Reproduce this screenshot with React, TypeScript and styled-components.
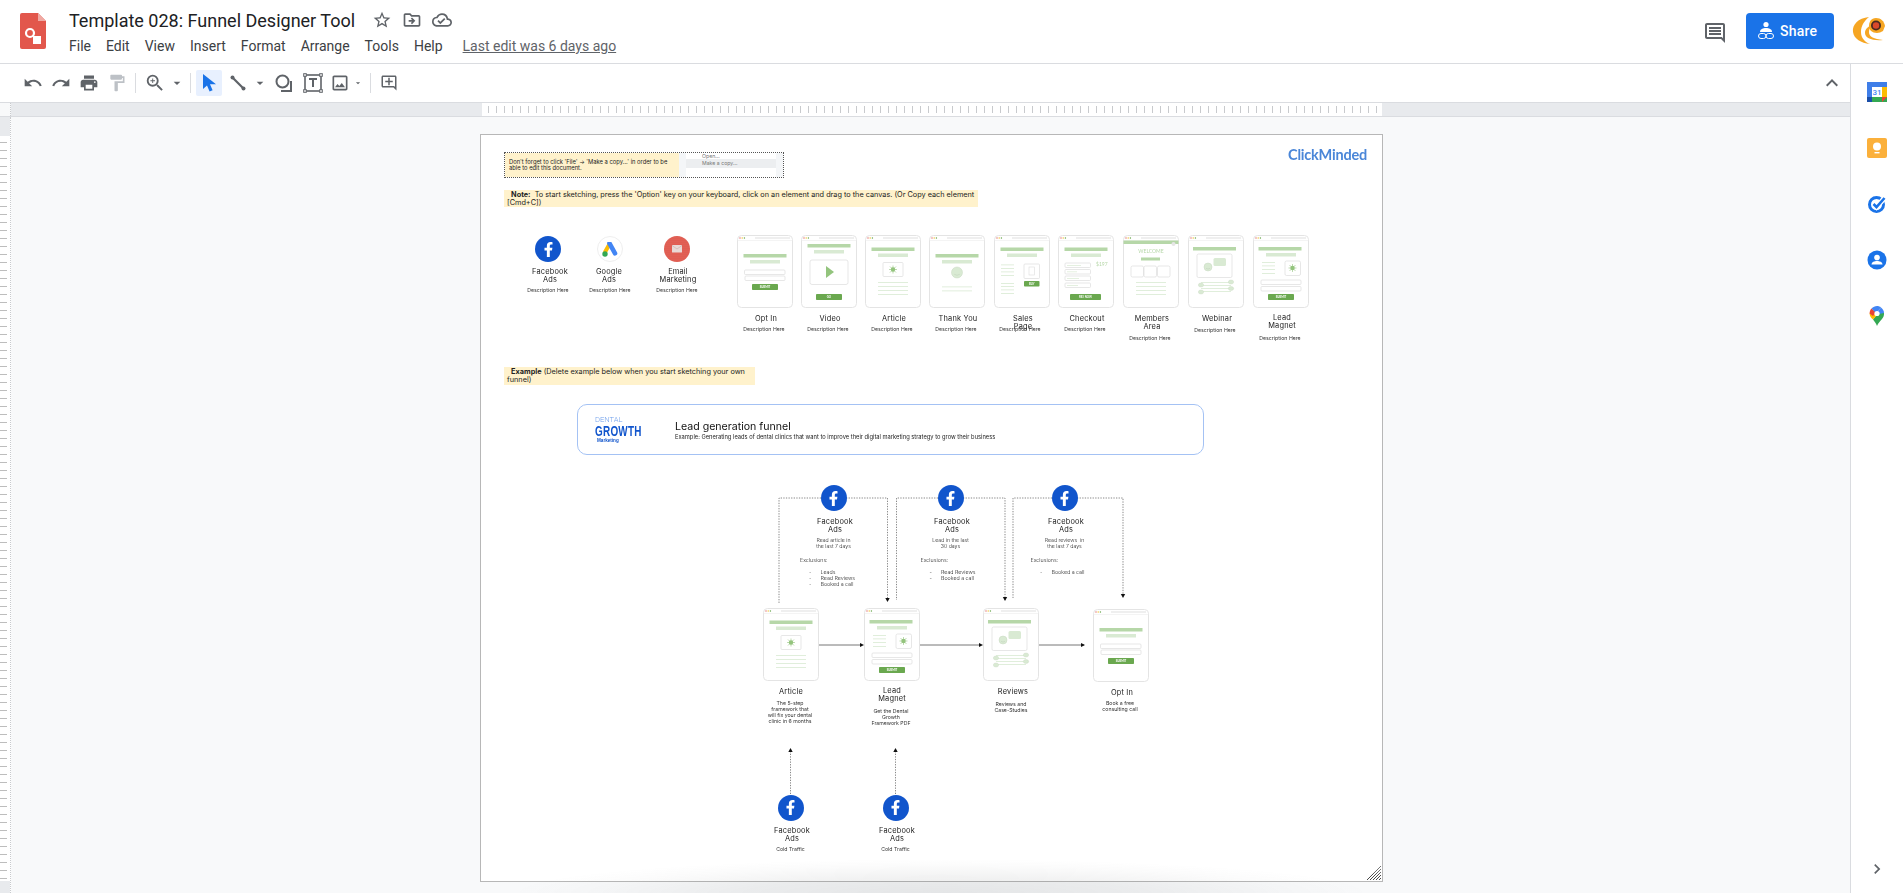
import * as React from 'react';
import styled, { createGlobalStyle } from 'styled-components';
import {
  MdArrowDropDown,
  MdChevronRight,
  MdFormatPaint,
  MdKeyboardArrowUp,
  MdOutlineAddComment,
  MdOutlineCloudDone,
  MdOutlineComment,
  MdOutlineDriveFileMove,
  MdOutlineImage,
  MdPrint,
  MdRedo,
  MdStarBorder,
  MdUndo,
  MdZoomIn,
} from 'react-icons/md';
import { FaFacebookF } from 'react-icons/fa';

// top-left corner of the drawing sheet in the window, items below are placed in window coords
const OX = 481;
const OY = 135;

const GREEN_DARK = '#6aa84f';
const GREEN_MID = '#b6d7a8';
const GREEN_LIGHT = '#d9ead3';
const GREY_LINE = '#e4e4e4';

const GlobalStyle = createGlobalStyle`
  html, body {
    margin: 0;
    height: 100%;
    overflow: hidden;
    background: #fff;
    font-family: Roboto, "Liberation Sans", sans-serif;
  }
`;

const Shell = styled.div`
  display: flex;
  flex-direction: column;
  height: 893px;
  overflow: hidden;
`;

const Header = styled.header`
  display: flex;
  align-items: flex-start;
  height: 63px;
  border-bottom: 1px solid #dadce0;
  padding-left: 20px;
`;

const TitleBlock = styled.div`
  display: flex;
  flex-direction: column;
  margin-left: 23px;
`;

const TitleRow = styled.div`
  display: flex;
  align-items: center;
  height: 24px;
  margin-top: 8px;
`;

const Title = styled.div`
  font-size: 18px;
  color: #202124;
  width: 298px;
  white-space: nowrap;
`;

const TitleIcon = styled.span`
  display: flex;
  justify-content: center;
  width: 30px;
  color: #5f6368;
`;

const Menu = styled.nav`
  display: flex;
  align-items: center;
  gap: 15px;
  margin-top: 6px;
  font-size: 14px;
  color: #3c4043;
`;

const LastEdit = styled.span`
  margin-left: 5px;
  color: #5f6368;
  text-decoration: underline;
`;

const HeaderRight = styled.div`
  display: flex;
  align-items: center;
  margin-left: auto;
  margin-top: 13px;
`;

const CommentIcon = styled.span`
  display: flex;
  color: #5f6368;
  margin-right: 19px;
  margin-top: 3px;
`;

const ShareButton = styled.button`
  display: flex;
  align-items: center;
  gap: 5px;
  width: 88px;
  height: 36px;
  padding: 0 0 0 11px;
  border: 0;
  border-radius: 4px;
  background: #1a73e8;
  color: #fff;
  font-family: Roboto, sans-serif;
  font-size: 14px;
  font-weight: 500;
  letter-spacing: 0.2px;
`;

const Avatar = styled.span`
  display: flex;
  margin: 0 17px 0 18px;
`;

const Body = styled.div`
  display: flex;
  flex: 1;
  min-height: 0;
`;

const Workspace = styled.main`
  display: flex;
  flex-direction: column;
  flex: 1;
  min-width: 0;
`;

const Toolbar = styled.div`
  display: flex;
  align-items: center;
  height: 38px;
  padding-left: 19px;
  border-bottom: 1px solid #dadce0;
`;

const ToolButton = styled.span<{ $w?: number; $active?: boolean; $ml?: number; $muted?: boolean }>`
  display: flex;
  align-items: center;
  justify-content: center;
  flex: none;
  width: ${(p) => p.$w ?? 28}px;
  height: 26px;
  margin-left: ${(p) => p.$ml ?? 0}px;
  border-radius: 2px;
  background: ${(p) => (p.$active ? '#e8f0fe' : 'transparent')};
  color: ${(p) => (p.$muted ? '#bdc1c6' : '#5f6368')};
`;

const ToolSep = styled.span<{ $ml: number; $mr: number }>`
  flex: none;
  width: 1px;
  height: 20px;
  margin: 0 ${(p) => p.$mr}px 0 ${(p) => p.$ml}px;
  background: #dadce0;
`;

const Collapse = styled.span`
  display: flex;
  margin-left: auto;
  margin-right: 6px;
  color: #5f6368;
`;

const TopRuler = styled.div`
  display: flex;
  height: 13px;
  background: #e8eaed;
  border-bottom: 1px solid #dadce0;
`;

const RulerCorner = styled.div`
  width: 10px;
  background: #f8f9fa;
  border-right: 1px dotted #c8cacd;
`;

const RulerScale = styled.div`
  width: 900px;
  margin-left: 471px;
  background-color: #fff;
  background-image: repeating-linear-gradient(90deg, #c8cacd 0 1px, transparent 1px 8px);
  background-position: 6px 3px;
  background-size: 100% 7px;
  background-repeat: no-repeat;
`;

const CanvasRow = styled.div`
  display: flex;
  flex: 1;
  min-height: 0;
`;

const LeftRuler = styled.div`
  display: flex;
  flex-direction: column;
  flex: none;
  width: 10px;
  border-right: 1px dotted #c8cacd;
`;

const LeftRulerGap = styled.div<{ $h?: number }>`
  flex: ${(p) => (p.$h ? 'none' : 1)};
  height: ${(p) => (p.$h ? `${p.$h}px` : 'auto')};
  background: #e8eaed;
`;

const LeftRulerScale = styled.div`
  height: 745px;
  background-color: #fff;
  background-image: repeating-linear-gradient(180deg, #bdbdbd 0 1px, transparent 1px 8px);
  background-position: 0 6px;
  background-size: 7px 100%;
  background-repeat: no-repeat;
`;

const Canvas = styled.div`
  position: relative;
  flex: 1;
  overflow: hidden;
  background: #f8f9fa;
  padding: 17px 0 0 469px;

  &::after {
    content: '';
    position: absolute;
    left: 500px;
    bottom: 0;
    width: 860px;
    height: 34px;
    background: radial-gradient(
      ellipse 50% 100% at 50% 100%,
      rgba(60, 64, 67, 0.1),
      rgba(60, 64, 67, 0.07) 45%,
      rgba(60, 64, 67, 0.02) 80%,
      transparent
    );
    pointer-events: none;
  }
`;

const Sheet = styled.div`
  position: relative;
  box-sizing: border-box;
  width: 903px;
  height: 748px;
  border: 1px solid #b7b7b7;
  background: #fff;
`;

const Drawing = styled.div`
  position: absolute;
  inset: 0;
  filter: blur(0.3px);
  font-family: Inter, Lato, sans-serif;
  color: #222;
`;

const ResizeGrip = styled.svg`
  position: absolute;
  right: 1px;
  bottom: 1px;
`;

const Place = styled.div<{ $x: number; $y: number }>`
  position: absolute;
  left: ${(p) => p.$x - OX}px;
  top: ${(p) => p.$y - OY}px;
`;

const Caption = styled(Place)`
  transform: translateX(-50%);
  text-align: center;
  white-space: pre;
`;

const NodeLabel = styled(Caption)`
  margin-top: 1px;
  font-size: 7.4px;
  line-height: 8.2px;
  letter-spacing: 0.2px;
`;

const NodeDesc = styled(Caption)`
  font-size: 5.2px;
  line-height: 6px;
  color: #333;
`;

const AudienceDesc = styled(NodeDesc)`
  font-weight: 300;
  color: #222;
`;

const SheetNote = styled(Place)`
  font-size: 5.3px;
  font-weight: 300;
  line-height: 6px;
  white-space: pre;
  color: #222;
`;

const Notice = styled(Place)<{ $w: number; $h: number }>`
  box-sizing: border-box;
  width: ${(p) => p.$w}px;
  height: ${(p) => p.$h}px;
  padding: 1px 3px;
  background: #fff2cc;
  font-size: 7.3px;
  line-height: 8px;
  white-space: pre;
  color: #222;

  b {
    font-weight: 700;
  }
`;

const CopyNotice = styled(Place)`
  display: flex;
  box-sizing: border-box;
  width: 280px;
  height: 26px;
  border: 1px dotted #555;
`;

const CopyText = styled.div`
  flex: none;
  width: 174px;
  padding: 6px 4px 0;
  box-sizing: border-box;
  background: #fff2cc;
  font-size: 5.8px;
  line-height: 6.4px;
  white-space: pre;
`;

const CopyShot = styled.div`
  flex: 1;
  padding: 0 7px;
  background: #f4f6f8;
`;

const CopyMenu = styled.div`
  height: 100%;
  overflow: hidden;
  background: #fff;
  color: #777;
  font-size: 5.2px;
`;

const CopyMenuItem = styled.div<{ $on?: boolean }>`
  height: ${(p) => (p.$on ? 9 : 6)}px;
  padding-left: 16px;
  line-height: ${(p) => (p.$on ? 9 : 6)}px;
  background: ${(p) => (p.$on ? '#eceef0' : 'transparent')};
`;

const Brand = styled(Place)`
  font-family: Lato, sans-serif;
  font-size: 14.5px;
  font-weight: 700;
  line-height: 14px;
  letter-spacing: -0.2px;
  color: #4a86d8;
`;

const FunnelBanner = styled(Place)`
  display: flex;
  align-items: center;
  box-sizing: border-box;
  width: 627px;
  height: 51px;
  padding-left: 17px;
  border: 1px solid #a4c2f4;
  border-radius: 10px;
`;

const BannerLogo = styled.div`
  display: flex;
  flex-direction: column;
  width: 80px;
  color: #1155cc;
`;

const LogoTop = styled.span`
  font-family: Roboto, sans-serif;
  font-size: 7.6px;
  font-weight: 300;
  line-height: 8px;
  color: #6d9eeb;
`;

const LogoMain = styled.span`
  display: block;
  transform: scaleX(0.66);
  transform-origin: left center;
  font-family: "Liberation Sans", sans-serif;
  font-size: 15px;
  font-weight: 700;
  line-height: 13px;
  letter-spacing: 0.4px;
`;

const LogoSub = styled.span`
  padding-left: 2px;
  font-family: "Liberation Sans", sans-serif;
  font-size: 4.6px;
  font-weight: 700;
  line-height: 7px;
`;

const BannerText = styled.div`
  margin-top: 1px;
`;

const BannerTitle = styled.div`
  font-family: Inter, sans-serif;
  font-size: 10.6px;
  line-height: 12px;
  color: #111;
`;

const BannerSub = styled.div`
  font-family: Inter, sans-serif;
  font-size: 5.76px;
  line-height: 7px;
  color: #222;
`;

const Round = styled(Place)<{ $bg: string; $ring?: boolean }>`
  display: flex;
  align-items: center;
  justify-content: center;
  width: 26px;
  height: 26px;
  margin: -13px 0 0 -13px;
  box-sizing: border-box;
  border-radius: 50%;
  border: ${(p) => (p.$ring ? '1px solid #eee' : '0')};
  background: ${(p) => p.$bg};
  color: #fff;
`;

const Connectors = styled.svg`
  position: absolute;
  left: 0;
  top: 0;
`;

const SidePanel = styled.aside`
  display: flex;
  flex-direction: column;
  align-items: center;
  flex: none;
  box-sizing: border-box;
  width: 53px;
  padding: 18px 0 14px;
  gap: 36px;
  border-left: 1px solid #dadce0;
  color: #5f6368;
`;

const SideExpand = styled.span`
  display: flex;
  margin-top: auto;
`;

/* ---------- drawings ---------- */

const SlidesLogo = () => (
  <svg width="26" height="36" viewBox="0 0 26 36" style={{ marginTop: 13 }}>
    <path d="M2 0h16l8 8v26a2 2 0 0 1-2 2H2a2 2 0 0 1-2-2V2a2 2 0 0 1 2-2z" fill="#e2574c" />
    <path d="M18 0l8 8h-8z" fill="#f0a9a3" />
    <circle cx="10" cy="20" r="4" fill="none" stroke="#fff" strokeWidth="2.2" />
    <rect x="13" y="23" width="8" height="8" fill="#fff" />
  </svg>
);

const ShareGlyph = () => (
  <svg width="18" height="20" viewBox="0 0 18 20" fill="none">
    <circle cx="9" cy="3.5" r="2.6" fill="#fff" />
    <path d="M3 11c0-3 3-4 6-4s6 1 6 4H3z" fill="#fff" />
    <rect x="1.5" y="12.5" width="7.5" height="5" rx="2.5" stroke="#fff" />
    <rect x="9" y="12.5" width="7.5" height="5" rx="2.5" stroke="#fff" />
  </svg>
);

const SwirlAvatar = () => (
  <svg width="34" height="30" viewBox="0 0 34 30" fill="none">
    <path d="M17 1C6 2 0 9 1 16c1 7 8 11 17 12-5-2-9-6-9-12 0-6 3-11 8-15z" fill="#f6a623" />
    <path d="M21 9c-5 1-8 4-8 8 0 5 7 8 18 7-9-1-14-3-14-8 0-3 1-5 4-7z" fill="#f6a623" />
    <path d="M24 2c-5 0-7 4-7 8 0 4 3 7 8 7 2 0 4-1 6-2l2-5c-1-5-4-8-9-8z" fill="#f6a623" />
    <circle cx="24" cy="9.500" r="5" fill="#4a2a20" />
    <circle cx="24" cy="9.500" r="3.200" fill="#d9482b" />
  </svg>
);

const CursorGlyph = () => (
  <svg width="18" height="20" viewBox="0 0 18 20">
    <path d="M3 1v15l4-3.6 2.6 6.2 3-1.3-2.6-6H16z" fill="#1a73e8" />
  </svg>
);

const LineGlyph = () => (
  <svg width="18" height="18" viewBox="0 0 18 18">
    <path d="M3.5 3.5l11 11" stroke="#5f6368" strokeWidth="2.2" />
    <circle cx="3.5" cy="3.5" r="2" fill="#5f6368" />
    <circle cx="14.5" cy="14.5" r="2" fill="#5f6368" />
  </svg>
);

const ShapeGlyph = () => (
  <svg width="20" height="20" viewBox="0 0 20 20" fill="none" stroke="#5f6368" strokeWidth="2">
    <circle cx="8.5" cy="8.5" r="6" />
    <path d="M17 8v10H7" />
  </svg>
);

const TextBoxGlyph = () => (
  <svg width="20" height="20" viewBox="0 0 20 20" fill="none" stroke="#5f6368">
    <rect x="2" y="2" width="16" height="16" strokeWidth="1.6" />
    <rect x="0.7" y="0.7" width="2.6" height="2.6" fill="#fff" />
    <rect x="16.7" y="0.7" width="2.6" height="2.6" fill="#fff" />
    <rect x="0.7" y="16.7" width="2.6" height="2.6" fill="#fff" />
    <rect x="16.7" y="16.7" width="2.6" height="2.6" fill="#fff" />
    <path d="M6 6h8M10 6v8" strokeWidth="2" />
  </svg>
);

const CalendarGlyph = () => (
  <svg width="20" height="20" viewBox="0 0 20 20">
    <rect width="20" height="20" rx="1.5" fill="#fff" />
    <path d="M0 0h20v5H0z" fill="#3f7ee8" />
    <path d="M0 5h5v10H0z" fill="#3f7ee8" />
    <path d="M15 5h5v10h-5z" fill="#fbbc04" />
    <path d="M5 15h15v5H5z" fill="#34a853" />
    <path d="M0 15h5v5H0z" fill="#1a4ea8" />
    <path d="M15 15h5l-5 5z" fill="#ea4335" />
    <text x="10" y="12.8" textAnchor="middle" fontSize="8" fontFamily="Roboto, sans-serif" fontWeight="500" fill="#4285f4">
      31
    </text>
  </svg>
);

const KeepGlyph = () => (
  <svg width="20" height="20" viewBox="0 0 20 20">
    <rect width="20" height="20" rx="2" fill="#fbb03b" />
    <circle cx="10" cy="8.5" r="4" fill="#fff" />
    <rect x="7.5" y="14" width="5" height="1.4" fill="#fff" />
  </svg>
);

const TasksGlyph = () => (
  <svg width="20" height="20" viewBox="0 0 20 20" fill="none">
    <circle cx="9.5" cy="10.5" r="7" stroke="#1a73e8" strokeWidth="3" />
    <path d="M6.5 10l3 3 8-9" stroke="#fff" strokeWidth="5" />
    <path d="M6.5 10l3 3 8-9" stroke="#1a73e8" strokeWidth="2.6" />
  </svg>
);

const ContactsGlyph = () => (
  <svg width="20" height="20" viewBox="0 0 20 20">
    <circle cx="10" cy="10" r="9.5" fill="#1a73e8" />
    <circle cx="10" cy="7.5" r="2.8" fill="#fff" />
    <path d="M4.5 14.5c0-2.4 3-3.5 5.5-3.5s5.500 1.100 5.500 3.500z" fill="#fff" />
  </svg>
);

const MapsGlyph = () => (
  <svg width="16" height="20" viewBox="0 0 16 20">
    <path d="M8 20c-1-3-2.500-4.500-4-6.500L10 6l5 1c.3 2.500-.8 4.500-2 6-1.600 2-4 4-5 7z" fill="#34a853" />
    <path d="M2.500 3L0.600 7.500c0 2.300 1.400 4.300 3.400 6L9 8z" fill="#fbbc04" />
    <path d="M2.500 2.500L7 6.500 4 10 0.600 7.500c0-2 .7-3.700 1.900-5z" fill="#ea4335" />
    <path d="M2.500 2.500C4 .9 6 0 8 0c1.500 0 3 .5 4 1.500L7 7z" fill="#4285f4" />
    <path d="M12 1.500c1.900 1.300 3 3.500 3 5.500L10 8 7 7z" fill="#4285f4" />
    <circle cx="8" cy="7.500" r="2.600" fill="#fff" />
  </svg>
);

const GoogleAdsGlyph = () => (
  <svg width="16" height="15" viewBox="0 0 16 15">
    <path d="M5.500 1.500L1 9.500l3.500 2L9 3.500z" fill="#fbbc04" />
    <path d="M5.500 2.500a2.300 2.300 0 0 1 4-2.300l5.500 10a2.300 2.300 0 0 1-4 2.300z" fill="#4285f4" />
    <circle cx="3" cy="12" r="2.700" fill="#34a853" />
  </svg>
);

const EmailGlyph = () => (
  <svg width="26" height="26" viewBox="0 0 26 26">
    <defs>
      <pattern id="dots" width="2" height="2" patternUnits="userSpaceOnUse">
        <circle cx="1" cy="1" r="0.45" fill="#fff" opacity="0.7" />
      </pattern>
    </defs>
    <circle cx="13" cy="13" r="13" fill="#dd4f43" />
    <circle cx="13" cy="13" r="13" fill="url(#dots)" />
    <rect x="8" y="9" width="10" height="7.500" rx="0.600" fill="#e9d9d6" />
    <path d="M8 9.500l5 3.500 5-3.500" fill="none" stroke="#cbb4b0" strokeWidth="0.700" />
  </svg>
);

/* ---------- page mockups ---------- */

type Kind = 'optin' | 'video' | 'article' | 'thanks' | 'sales' | 'checkout' | 'members' | 'webinar' | 'magnet';

const Bar = ({ x, y, w, h = 3.5, c = GREEN_MID }: { x: number; y: number; w: number; h?: number; c?: string }) => (
  <rect x={x} y={y} width={w} height={h} fill={c} />
);

const Heading = ({ y }: { y: number }) => (
  <>
    <Bar x={6.500} y={y} w={43} />
    <Bar x={13} y={y + 6} w={30} c={GREEN_LIGHT} />
  </>
);

const Rows = ({ x, w, ys }: { x: number; w: number; ys: number[] }) => (
  <>
    {ys.map((y) => (
      <rect key={y} x={x} y={y} width={w} height="0.800" fill={GREEN_LIGHT} />
    ))}
  </>
);

const Field = ({ x, y, w, h = 4.500 }: { x: number; y: number; w: number; h?: number }) => (
  <rect x={x} y={y} width={w} height={h} rx="1" fill="#fff" stroke="#dcdcdc" strokeWidth="0.700" />
);

const Cta = ({ x, y, w, h = 6, label }: { x: number; y: number; w: number; h?: number; label: string }) => (
  <>
    <rect x={x} y={y} width={w} height={h} rx="0.800" fill={GREEN_DARK} />
    <text
      x={x + w / 2}
      y={y + h / 2 + 1}
      textAnchor="middle"
      fontSize="2.800"
      fontWeight="700"
      fontFamily="Lato, sans-serif"
      fill="#fff"
    >
      {label}
    </text>
  </>
);

const Sun = ({ cx, cy }: { cx: number; cy: number }) => (
  <>
    <circle cx={cx} cy={cy} r="2.200" fill="#93c47d" />
    <path
      d={`M${cx - 4} ${cy}h8M${cx} ${cy - 4}v8M${cx - 3} ${cy - 3}l6 6M${cx - 3} ${cy + 3}l6-6`}
      stroke="#93c47d"
      strokeWidth="0.600"
    />
  </>
);

const Face = ({ cx, cy, r }: { cx: number; cy: number; r: number }) => (
  <>
    <circle cx={cx} cy={cy} r={r} fill={GREEN_LIGHT} stroke="#c9d9c3" strokeWidth="0.500" />
    <path d={`M${cx - r / 2} ${cy + r / 3}q${r / 2} ${r / 3} ${r} 0`} fill="none" stroke="#b8c9b2" strokeWidth="0.400" />
  </>
);

const MockBody = ({ kind }: { kind: Kind }) => {
  switch (kind) {
    case 'optin':
      return (
        <>
          <Heading y={19} />
          <Field x={7.500} y={35} w={40.500} />
          <Field x={8} y={41} w={40} />
          <Cta x={15} y={49} w={26} label="SUBMIT" />
        </>
      );
    case 'video':
      return (
        <>
          <Heading y={9} />
          <rect x={9} y={25} width="38" height="24.500" rx="2" fill="#fff" stroke="#dcdcdc" strokeWidth="0.700" />
          <path d="M25 31l8 6-8 6z" fill="#93c47d" />
          <Cta x={15} y={59} w={26} label="GO" />
        </>
      );
    case 'article':
      return (
        <>
          <Heading y={12.500} />
          <rect x={18} y={27.500} width="20" height="14" rx="1" fill="#fff" stroke="#dcdcdc" strokeWidth="0.700" />
          <Sun cx={28} cy={34.500} />
          <Rows x={13} w={30} ys={[47, 51, 55, 59]} />
        </>
      );
    case 'thanks':
      return (
        <>
          <Heading y={19} />
          <Face cx={28} cy={37.500} r={5.500} />
          <Rows x={13} w={30} ys={[51.500, 55.500]} />
        </>
      );
    case 'sales':
      return (
        <>
          <Heading y={12.500} />
          <Rows x={7} w={13} ys={[29.500, 33, 36.500, 40, 48, 51, 54.500, 58]} />
          <rect x={30} y={29} width="15.500" height="14.500" rx="1" fill="#fff" stroke="#dcdcdc" strokeWidth="0.700" />
          <rect x={35} y={32} width="5.500" height="8" fill="#fff" stroke="#dcdcdc" strokeWidth="0.600" />
          <Cta x={30} y={46} w={15.500} h={5.500} label="BUY" />
        </>
      );
    case 'checkout':
      return (
        <>
          <Heading y={12.500} />
          <text x={38} y={31} fontSize="5" fontFamily="Lato, sans-serif" fill={GREEN_MID}>
            $197
          </text>
          {[28, 34.500, 41, 48].map((y, i) => (
            <React.Fragment key={y}>
              <Field x={7} y={y} w={25.500} />
              <rect x={9} y={y + 2} width={[14, 10, 12, 11][i]} height="0.700" fill={GREEN_LIGHT} />
            </React.Fragment>
          ))}
          <Cta x={12} y={59} w={31} label="PAY NOW" />
        </>
      );
    case 'members':
      return (
        <>
          <Bar x={0.500} y={5.500} w={55} h={3.500} />
          <circle cx={50.500} cy={9} r="2" fill="#e6e6e6" />
          <text x={28} y={17.500} textAnchor="middle" fontSize="5" fontFamily="Lato, sans-serif" fill={GREEN_MID}>
            WELCOME
          </text>
          <Bar x={18} y={22.500} w={19} h={3} />
          {[8, 21, 34.500].map((x) => (
            <rect key={x} x={x} y={31} width="12.500" height="11" rx="1.500" fill="#fff" stroke="#dcdcdc" strokeWidth="0.700" />
          ))}
          <Rows x={13} w={30} ys={[47, 51, 55, 59]} />
        </>
      );
    case 'webinar':
      return (
        <>
          <Bar x={5} y={12} w={43} />
          <rect x={9} y={19} width="35" height="23.500" rx="1.500" fill="#fff" stroke="#dcdcdc" strokeWidth="0.700" />
          <Face cx={20} cy={32} r={4} />
          <rect x={25.500} y={23} width="12.500" height="8" rx="1.500" fill={GREEN_LIGHT} />
          <Rows x={13} w={30} ys={[47, 50, 53, 56]} />
          <ellipse cx={43} cy={47} rx="2.700" ry="2" fill={GREEN_LIGHT} stroke="#c9d9c3" strokeWidth="0.400" />
          <ellipse cx={13} cy={50} rx="2.700" ry="2" fill={GREEN_LIGHT} stroke="#c9d9c3" strokeWidth="0.400" />
          <ellipse cx={43} cy={53.500} rx="2.700" ry="2" fill={GREEN_LIGHT} stroke="#c9d9c3" strokeWidth="0.400" />
          <ellipse cx={13} cy={57} rx="2.700" ry="2" fill={GREEN_LIGHT} stroke="#c9d9c3" strokeWidth="0.400" />
        </>
      );
    default:
      return (
        <>
          <Bar x={5.500} y={12} w={43} />
          <Bar x={13} y={18} w={30} c={GREEN_LIGHT} />
          <Rows x={9} w={13} ys={[27, 30.500, 34, 38]} />
          <rect x={32} y={26} width="15.500" height="14.500" rx="1.500" fill="#fff" stroke="#dcdcdc" strokeWidth="0.700" />
          <Sun cx={39.500} cy={33} />
          <Field x={8} y={45} w={40} />
          <Field x={8} y={51.500} w={40} />
          <Cta x={15} y={59} w={26} label="SUBMIT" />
        </>
      );
  }
};

const Mock = ({ kind, x, y }: { kind: Kind; x: number; y: number }) => (
  <Place $x={x} $y={y}>
    <svg width="56" height="73" viewBox="0 0 56 73" style={{ display: 'block' }}>
      <rect x="0.500" y="0.500" width="55" height="72" rx="4" fill="#fff" stroke={GREY_LINE} />
      <path d="M0.500 5.500h55" stroke="#efefef" strokeWidth="0.700" />
      <circle cx="3" cy="3" r="0.700" fill="#e06666" />
      <circle cx="5.200" cy="3" r="0.700" fill="#f1c232" />
      <circle cx="7.400" cy="3" r="0.700" fill="#6aa84f" />
      <rect x="18" y="2.500" width="35" height="1" fill="#e0e0e0" />
      <MockBody kind={kind} />
    </svg>
  </Place>
);

/* ---------- sheet content ---------- */

const sources = [
  { x: 548, label: 'Facebook\nAds', lx: 550 },
  { x: 610, label: 'Google\nAds', lx: 609 },
  { x: 677, label: 'Email\nMarketing', lx: 678 },
];

const templates: {
  kind: Kind;
  x: number;
  label: string;
  ly: number;
  dy: number;
  dx?: number;
}[] = [
  { kind: 'optin', x: 737, label: 'Opt In', ly: 314, dy: 326 },
  { kind: 'video', x: 801, label: 'Video', ly: 314, dy: 326 },
  { kind: 'article', x: 865, label: 'Article', ly: 314, dy: 326 },
  { kind: 'thanks', x: 929, label: 'Thank You', ly: 314, dy: 326 },
  { kind: 'sales', x: 994, label: 'Sales\nPage', ly: 314, dy: 326, dx: -1 },
  { kind: 'checkout', x: 1058, label: 'Checkout', ly: 314, dy: 326 },
  { kind: 'members', x: 1123, label: 'Members\nArea', ly: 314, dy: 334.500 },
  { kind: 'webinar', x: 1188, label: 'Webinar', ly: 313.500, dy: 327 },
  { kind: 'magnet', x: 1253, label: 'Lead\nMagnet', ly: 312.500, dy: 334.500 },
];

const audiences = [
  {
    cx: 833.500,
    lx: 835,
    text: 'Read article in\nthe last 7 days',
    ex: 800,
    dash: 809,
    list: 'Leads\nRead Reviews\nBooked a call',
  },
  {
    cx: 950.500,
    lx: 952,
    text: 'Lead in the last\n30 days',
    ex: 920.500,
    dash: 929.500,
    list: 'Read Reviews\nBooked a call',
  },
  {
    cx: 1064.500,
    lx: 1066,
    text: 'Read reviews  in\nthe last 7 days',
    ex: 1030.500,
    dash: 1040,
    list: 'Booked a call',
  },
];

const steps: {
  kind: Kind;
  x: number;
  y: number;
  label: string;
  lx: number;
  ly: number;
  desc: string;
  dx: number;
  dy: number;
}[] = [
  {
    kind: 'article',
    x: 763,
    y: 608,
    label: 'Article',
    lx: 791,
    ly: 687,
    desc: 'The 5-step\nframework that\nwill fix your dental\nclinic in 6 months',
    dx: 790,
    dy: 699.500,
  },
  {
    kind: 'magnet',
    x: 864,
    y: 608,
    label: 'Lead\nMagnet',
    lx: 892,
    ly: 685.500,
    desc: 'Get the Dental\nGrowth\nFramework PDF',
    dx: 891,
    dy: 707.500,
  },
  {
    kind: 'webinar',
    x: 983,
    y: 608,
    label: 'Reviews',
    lx: 1013,
    ly: 687,
    desc: 'Reviews and\nCase-Studies',
    dx: 1011,
    dy: 700.500,
  },
  {
    kind: 'optin',
    x: 1093,
    y: 609,
    label: 'Opt In',
    lx: 1122,
    ly: 687.500,
    desc: 'Book a free\nconsulting call',
    dx: 1120,
    dy: 700,
  },
];

const coldTraffic = [790.500, 895.500];

const Arrow = ({ x, y, dir }: { x: number; y: number; dir: 'down' | 'up' | 'right' }) => {
  const d =
    dir === 'down'
      ? `M${x - 2.200} ${y - 4}h4.400L${x} ${y}z`
      : dir === 'up'
      ? `M${x - 2.200} ${y + 4}h4.400L${x} ${y}z`
      : `M${x - 4} ${y - 2}v4L${x} ${y}z`;
  return <path d={d} fill="#111" />;
};

const dashProps = { fill: 'none', stroke: '#555', strokeWidth: 0.7, strokeDasharray: '1.3 1.3' };

const FunnelLines = () => (
  <Connectors width="901" height="746" viewBox={`${OX} ${OY} 901 746`}>
    <path d="M821 498H779V603" {...dashProps} />
    <path d="M846 498H887.500V600" {...dashProps} />
    <Arrow x={887.500} y={602} dir="down" />
    <path d="M938 498H896.500V600" {...dashProps} />
    <path d="M963 498H1005V600" {...dashProps} />
    <Arrow x={1005} y={601} dir="down" />
    <path d="M1052 498H1013V598" {...dashProps} />
    <path d="M1077 498H1123V596" {...dashProps} />
    <Arrow x={1123} y={598} dir="down" />

    <path d="M819 645H862M920 645H981M1039 645H1084" stroke="#777" strokeWidth="1" fill="none" />
    <Arrow x={864} y={645} dir="right" />
    <Arrow x={983} y={645} dir="right" />
    <Arrow x={1085} y={645} dir="right" />

    <path d="M790.500 794V750M895.500 794V750" {...dashProps} />
    <Arrow x={790.500} y={748} dir="up" />
    <Arrow x={895.500} y={748} dir="up" />
  </Connectors>
);

const SheetContent = () => (
  <Drawing>
    <CopyNotice $x={504} $y={152}>
      <CopyText>{"Don't forget to click 'File' -> 'Make a copy...' in order to be\nable to edit this document."}</CopyText>
      <CopyShot>
        <CopyMenu>
          <CopyMenuItem>Open...</CopyMenuItem>
          <CopyMenuItem $on>Make a copy...</CopyMenuItem>
        </CopyMenu>
      </CopyShot>
    </CopyNotice>

    <Notice $x={504} $y={190} $w={474} $h={17}>
      {'  '}
      <b>Note:</b>
      {"  To start sketching, press the 'Option' key on your keyboard, click on an element and drag to the canvas. (Or Copy each element\n[Cmd+C])"}
    </Notice>

    <Brand $x={1288} $y={148}>
      ClickMinded
    </Brand>

    <Round $x={sources[0].x} $y={249} $bg="#1155cc">
      <FaFacebookF size={15} />
    </Round>
    <Round $x={sources[1].x} $y={249} $bg="#fff" $ring>
      <GoogleAdsGlyph />
    </Round>
    <Round $x={sources[2].x} $y={249} $bg="transparent">
      <EmailGlyph />
    </Round>
    {sources.map((s) => (
      <React.Fragment key={s.x}>
        <NodeLabel $x={s.lx} $y={267}>
          {s.label}
        </NodeLabel>
        <NodeDesc $x={s.x} $y={287}>
          Description Here
        </NodeDesc>
      </React.Fragment>
    ))}

    {templates.map((t) => (
      <React.Fragment key={t.kind}>
        <Mock kind={t.kind} x={t.x} y={235} />
        <NodeLabel $x={t.x + 29} $y={t.ly}>
          {t.label}
        </NodeLabel>
        <NodeDesc $x={t.x + 27 + (t.dx ?? 0)} $y={t.dy}>
          Description Here
        </NodeDesc>
      </React.Fragment>
    ))}

    <Notice $x={504} $y={367} $w={251} $h={18}>
      {'  '}
      <b>Example</b>
      {' (Delete example below when you start sketching your own\nfunnel)'}
    </Notice>

    <FunnelBanner $x={577} $y={404}>
      <BannerLogo>
        <LogoTop>DENTAL</LogoTop>
        <LogoMain>GROWTH</LogoMain>
        <LogoSub>Marketing</LogoSub>
      </BannerLogo>
      <BannerText>
        <BannerTitle>Lead generation funnel</BannerTitle>
        <BannerSub>Example: Generating leads of dental clinics that want  to improve their digital marketing strategy to grow their business</BannerSub>
      </BannerText>
    </FunnelBanner>

    <FunnelLines />

    {audiences.map((a) => (
      <React.Fragment key={a.cx}>
        <Round $x={a.cx} $y={498} $bg="#1155cc">
          <FaFacebookF size={15} />
        </Round>
        <NodeLabel $x={a.lx} $y={517}>
          {'Facebook\nAds'}
        </NodeLabel>
        <AudienceDesc $x={a.cx} $y={537}>
          {a.text}
        </AudienceDesc>
        <SheetNote $x={a.ex} $y={557}>
          Exclusions:
        </SheetNote>
        <SheetNote $x={a.dash} $y={569}>
          {a.list
            .split('\n')
            .map(() => '-')
            .join('\n')}
        </SheetNote>
        <SheetNote $x={a.dash + 11.500} $y={569}>
          {a.list}
        </SheetNote>
      </React.Fragment>
    ))}

    {steps.map((s) => (
      <React.Fragment key={s.x}>
        <Mock kind={s.kind} x={s.x} y={s.y} />
        <NodeLabel $x={s.lx} $y={s.ly}>
          {s.label}
        </NodeLabel>
        <NodeDesc $x={s.dx} $y={s.dy}>
          {s.desc}
        </NodeDesc>
      </React.Fragment>
    ))}

    {coldTraffic.map((x) => (
      <React.Fragment key={x}>
        <Round $x={x} $y={807.500} $bg="#1155cc">
          <FaFacebookF size={15} />
        </Round>
        <NodeLabel $x={x + 1.500} $y={826}>
          {'Facebook\nAds'}
        </NodeLabel>
        <NodeDesc $x={x} $y={846}>
          Cold Traffic
        </NodeDesc>
      </React.Fragment>
    ))}
  </Drawing>
);

export default function App() {
  return (
    <Shell>
      <GlobalStyle />
      <Header>
        <SlidesLogo />
        <TitleBlock>
          <TitleRow>
            <Title>Template 028: Funnel Designer Tool</Title>
            <TitleIcon>
              <MdStarBorder size={20} />
            </TitleIcon>
            <TitleIcon>
              <MdOutlineDriveFileMove size={20} />
            </TitleIcon>
            <TitleIcon>
              <MdOutlineCloudDone size={20} />
            </TitleIcon>
          </TitleRow>
          <Menu>
            <span>File</span>
            <span>Edit</span>
            <span>View</span>
            <span>Insert</span>
            <span>Format</span>
            <span>Arrange</span>
            <span>Tools</span>
            <span>Help</span>
            <LastEdit>Last edit was 6 days ago</LastEdit>
          </Menu>
        </TitleBlock>
        <HeaderRight>
          <CommentIcon>
            <MdOutlineComment size={24} />
          </CommentIcon>
          <ShareButton>
            <ShareGlyph />
            Share
          </ShareButton>
          <Avatar>
            <SwirlAvatar />
          </Avatar>
        </HeaderRight>
      </Header>

      <Body>
        <Workspace>
          <Toolbar>
            <ToolButton>
              <MdUndo size={20} />
            </ToolButton>
            <ToolButton>
              <MdRedo size={20} />
            </ToolButton>
            <ToolButton>
              <MdPrint size={20} />
            </ToolButton>
            <ToolButton $muted>
              <MdFormatPaint size={20} />
            </ToolButton>
            <ToolSep $ml={4} $mr={5} />
            <ToolButton>
              <MdZoomIn size={22} />
            </ToolButton>
            <ToolButton $w={16}>
              <MdArrowDropDown size={24} />
            </ToolButton>
            <ToolSep $ml={5} $mr={5} />
            <ToolButton $w={26} $active>
              <CursorGlyph />
            </ToolButton>
            <ToolButton $ml={2}>
              <LineGlyph />
            </ToolButton>
            <ToolButton $w={16}>
              <MdArrowDropDown size={24} />
            </ToolButton>
            <ToolButton $ml={2}>
              <ShapeGlyph />
            </ToolButton>
            <ToolButton $ml={1}>
              <TextBoxGlyph />
            </ToolButton>
            <ToolButton $w={26}>
              <MdOutlineImage size={20} />
            </ToolButton>
            <ToolButton $w={10}>
              <MdArrowDropDown size={24} />
            </ToolButton>
            <ToolSep $ml={7} $mr={4} />
            <ToolButton>
              <MdOutlineAddComment size={18} />
            </ToolButton>
            <Collapse>
              <MdKeyboardArrowUp size={24} />
            </Collapse>
          </Toolbar>
          <TopRuler>
            <RulerCorner />
            <RulerScale />
          </TopRuler>
          <CanvasRow>
            <LeftRuler>
              <LeftRulerGap $h={19} />
              <LeftRulerScale />
              <LeftRulerGap />
            </LeftRuler>
            <Canvas>
              <Sheet>
                <SheetContent />
                <ResizeGrip width="14" height="14" viewBox="0 0 14 14">
                  <path d="M0 14L14 0M3 14L14 3M6 14L14 6M9 14l5-5M12 14l2-2" stroke="#000" strokeWidth="1" strokeDasharray="1 0.500" />
                </ResizeGrip>
              </Sheet>
            </Canvas>
          </CanvasRow>
        </Workspace>
        <SidePanel>
          <CalendarGlyph />
          <KeepGlyph />
          <TasksGlyph />
          <ContactsGlyph />
          <MapsGlyph />
          <SideExpand>
            <MdChevronRight size={20} />
          </SideExpand>
        </SidePanel>
      </Body>
    </Shell>
  );
}
